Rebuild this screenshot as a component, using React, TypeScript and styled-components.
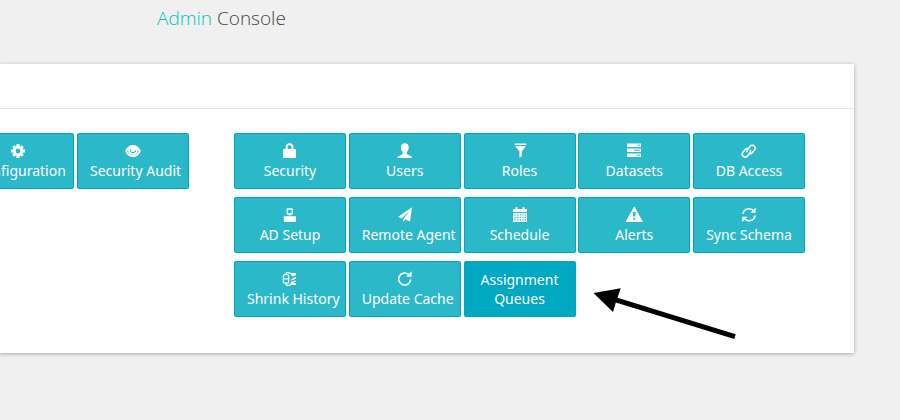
import React from "react";
import styled, { createGlobalStyle } from "styled-components";

const GlobalStyle = createGlobalStyle`
  * { box-sizing: border-box; }
  body {
    margin: 0;
    background: #f0f0f0;
    font-family: "Open Sans", "Noto Sans", sans-serif;
  }
`;

const Page = styled.main`
  padding: 0 46px 40px 0;
`;

const Title = styled.h1`
  margin: 0;
  padding: 4px 0 0 157px;
  height: 64px;
  font-size: 19px;
  line-height: 28px;
  font-weight: 300;
  color: #444;
`;

const Accent = styled.span`
  color: #00c4b6;
`;

const Panel = styled.section`
  background: #fff;
  box-shadow: 0 1px 4px rgba(0, 0, 0, 0.3);
`;

const PanelHeader = styled.header`
  height: 45px;
  border-bottom: 1px solid #e1e4e8;
`;

const PanelBody = styled.div`
  display: flex;
  align-items: flex-start;
  gap: 45px;
  padding: 24px 49px 36px 0;
`;

const SideGroup = styled.div`
  flex: 1;
  min-width: 0;
  display: flex;
  justify-content: flex-end;
  gap: 3px;
  overflow: hidden;
`;

const MainGroup = styled.div`
  position: relative;
  flex: 0 0 571px;
  display: grid;
  grid-template-columns: repeat(5, 112px);
  justify-content: space-between;
  row-gap: 8px;
`;

const TileButton = styled.button<{ $active?: boolean }>`
  flex: none;
  display: block;
  width: 112px;
  height: 56px;
  padding: 8px 12px;
  border: 1px solid #00a5bd;
  border-radius: 2px;
  background: ${(p) => (p.$active ? "#00a8c2" : "#2bb8c9")};
  color: #fff;
  font-family: "Noto Sans", "Open Sans", sans-serif;
  font-size: 14px;
  line-height: 19px;
  cursor: pointer;
`;

const Label = styled.span`
  display: flex;
  justify-content: safe center;
  white-space: nowrap;
`;

const Glyph = styled.svg`
  display: block;
  width: 18px;
  height: 19px;
  margin: 0 auto;
  fill: #fff;
`;

const Pointer = styled.svg`
  position: absolute;
  right: 68px;
  top: 155px;
  width: 144px;
  height: 52px;
`;

const line = { fill: "none", stroke: "#fff" };

const icons: Record<string, React.ReactNode> = {
  cog: (
    <>
      <g stroke="#fff" strokeWidth="3">
        <path d="M9 2v2.5M9 13.5V16M2 9h2.5M13.5 9H16M4.2 4.2l1.5 1.5M12.3 12.3l1.5 1.5M13.8 4.2l-1.5 1.5M5.7 12.3l-1.5 1.5" />
      </g>
      <circle cx="9" cy="9" r="3.8" {...line} strokeWidth="2.8" />
    </>
  ),
  eye: (
    <>
      <path d="M2.200 9C3.800 5.600 6 4 9 4S14.200 5.600 15.800 9C14.200 12.400 12 14 9 14S3.800 12.400 2.200 9Z" {...line} strokeWidth="2" />
      <circle cx="9" cy="8.200" r="4.800" />
      <path d="M6.300 7.400c-.2 2.300 1.200 3.400 3 3.200 1.400-.2 2.300-1.200 2.300-2.400" {...line} strokeWidth="1.100" stroke="#2bb8c9" />
    </>
  ),
  lock: (
    <>
      <path d="M5.600 8V5a2.700 2.700 0 0 1 2.700-2.700h.400A2.700 2.700 0 0 1 11.400 5v3" {...line} strokeWidth="2" />
      <rect x="2" y="7" width="13" height="9" rx="1" />
    </>
  ),
  user: (
    <path d="M8.800 1.300c2.400 0 3.900 1.600 3.900 4 0 2-.7 3.700-1.900 4.800v1.300c0 .5.300.8.800 1.100l3 1.400c.9.400 1.400 1 1.400 2.100H1.500c0-1.100.5-1.700 1.400-2.100l3-1.400c.5-.3.800-.6.800-1.100v-1.300C5.500 9 4.900 7.300 4.900 5.300c0-2.400 1.500-4 3.900-4Z" />
  ),
  filter: (
    <>
      <rect x="3.500" y="1.500" width="12" height="1.500" rx=".7" />
      <path d="M4 4h11l-4.200 5.600V14l-2.300 2V9.600Z" />
    </>
  ),
  tasks: (
    <>
      <path d="M2 1.500h14v3.500H2ZM2 6.500h14v3.500H2ZM2 11.500h14v3.500H2Z" />
      <path d="M12.500 3.200H15M9 8.200h6M11.500 13.200H15" {...line} stroke="#2bb8c9" strokeWidth="1" />
    </>
  ),
  link: (
    <g {...line} strokeWidth="1.600" strokeLinecap="round" transform="translate(-.500 0) rotate(-52 9 9)">
      <path d="M10.500 10.300a2.800 2.800 0 0 1-1.900.900H4.500a2.900 2.900 0 0 1 0-5.800h3.600a2.900 2.900 0 0 1 2.500 1.600" />
      <path d="M7.500 8.200a2.800 2.800 0 0 1 1.900-.900h4.100a2.900 2.900 0 0 1 0 5.800H9.900a2.900 2.900 0 0 1-2.500-1.600" />
    </g>
  ),
  terminal: (
    <>
      <rect x="6.200" y="3" width="5" height="5" rx=".5" {...line} strokeWidth="1.300" />
      <path d="M8.200 8h1v2.500h-1Z" />
      <rect x="2.800" y="10.300" width="12.200" height="5.700" rx=".5" />
    </>
  ),
  plane: (
    <path fillRule="evenodd" d="M16 1.300 1.800 11l4 1.300L13.400 5 7.200 13.200V16l2.300-2.500L14 15.500Z" />
  ),
  calendar: (
    <>
      <path d="M2 3h14v3H2ZM4.500 1.300h2V4h-2ZM11.500 1.300h2V4h-2Z" />
      <path fillRule="evenodd" d="M2 7h14v9H2ZM3.300 8.200v1.300h1.500V8.200ZM6 8.200v1.300h1.500V8.200ZM8.700 8.200v1.300h1.300V8.200ZM11.200 8.200v1.300h1.300V8.200ZM13.700 8.200v1.300H15V8.200ZM3.300 10.700V12h1.500v-1.300ZM6 10.700V12h1.500v-1.300ZM8.700 10.700V12h1.300v-1.300ZM11.200 10.700V12h1.300v-1.300ZM13.700 10.700V12H15v-1.300ZM3.300 13.200v1.300h1.500v-1.300ZM6 13.200v1.300h1.500v-1.300ZM8.700 13.200v1.300h1.300v-1.300ZM11.200 13.200v1.300h1.300v-1.300ZM13.700 13.200v1.300H15v-1.300Z" />
    </>
  ),
  alert: (
    <path
      fillRule="evenodd"
      d="M9.300.900c.3 0 .5.100.7.500L17.500 15c.3.600.1 1-.5 1H1.500c-.6 0-.8-.4-.5-1L8.600 1.400c.2-.4.400-.5.700-.5ZM7.700 6l.6 4.600h1.900l.6-4.600ZM8.300 11.700v2h1.900v-2Z"
    />
  ),
  sync: (
    <>
      <path d="M3 8a6 6 0 0 1 10.600-3M15 9.500a6 6 0 0 1-10.600 3" {...line} strokeWidth="1.700" />
      <path d="M15.700 1.500v5.300h-5.300ZM2.300 16v-5.300h5.300Z" />
    </>
  ),
  shrink: (
    <>
      <rect x="2.300" y="4.600" width="5.400" height="8.600" rx="1.500" {...line} strokeWidth="1.200" />
      <path d="M2.300 8.800h5.400M5 4.600V3.300q0-.8 1-.8h2l1 1M5 13.200v1.300q0 .8 1 .8h2.500l1-1" {...line} strokeWidth="1.200" />
      <path d="M8.800 3H15v2.200l-3.700 1.300ZM10.200 9.200 15 6.800v1.800l-4.500 1.800ZM10.200 11.800 15 10.400v1.200l-3 1.200 3 .7V15H8.800Z" />
    </>
  ),
  repeat: (
    <>
      <path d="M14.700 9.500a6 6 0 1 1-2-5" {...line} strokeWidth="1.700" />
      <path d="M15.600 1.300v5.500h-5.500Z" />
    </>
  ),
};

interface TileProps {
  icon?: string;
  lines: string[];
  active?: boolean;
}

function Tile({ icon, lines, active }: TileProps) {
  return (
    <TileButton type="button" $active={active}>
      {icon && (
        <Glyph viewBox="0 0 18 19" aria-hidden="true">
          {icons[icon]}
        </Glyph>
      )}
      {lines.map((text) => (
        <Label key={text}>{text}</Label>
      ))}
    </TileButton>
  );
}

const sideTiles: TileProps[] = [
  { icon: "cog", lines: ["Configuration"] },
  { icon: "eye", lines: ["Security Audit"] },
];

const mainTiles: TileProps[] = [
  { icon: "lock", lines: ["Security"] },
  { icon: "user", lines: ["Users"] },
  { icon: "filter", lines: ["Roles"] },
  { icon: "tasks", lines: ["Datasets"] },
  { icon: "link", lines: ["DB Access"] },
  { icon: "terminal", lines: ["AD Setup"] },
  { icon: "plane", lines: ["Remote Agent"] },
  { icon: "calendar", lines: ["Schedule"] },
  { icon: "alert", lines: ["Alerts"] },
  { icon: "sync", lines: ["Sync Schema"] },
  { icon: "shrink", lines: ["Shrink History"] },
  { icon: "repeat", lines: ["Update Cache"] },
  { lines: ["Assignment", "Queues"], active: true },
];

export default function App() {
  return (
    <>
      <GlobalStyle />
      <Page>
        <Title>
          <Accent>Admin</Accent> Console
        </Title>
        <Panel>
          <PanelHeader />
          <PanelBody>
            <SideGroup>
              {sideTiles.map((tile) => (
                <Tile key={tile.lines[0]} {...tile} />
              ))}
            </SideGroup>
            <MainGroup>
              {mainTiles.map((tile) => (
                <Tile key={tile.lines[0]} {...tile} />
              ))}
              <Pointer viewBox="0 0 144 52" aria-hidden="true">
                <path d="M.500 5 27.700.300 24.500 9.800 142.700 46.300 141.300 51 22.800 14.500 20 24Z" />
              </Pointer>
            </MainGroup>
          </PanelBody>
        </Panel>
      </Page>
    </>
  );
}
